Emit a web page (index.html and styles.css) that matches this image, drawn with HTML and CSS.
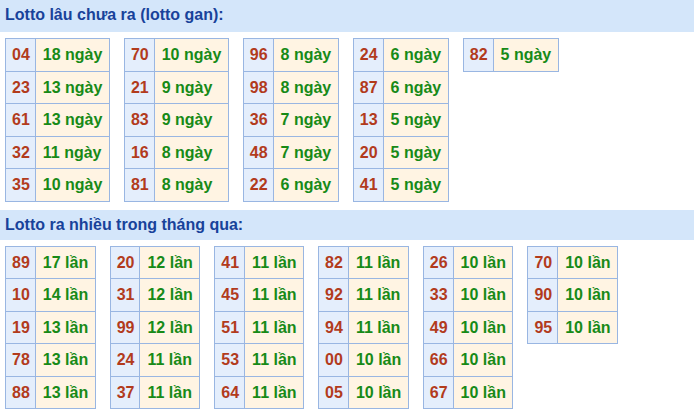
FILE: index.html
```html
<!DOCTYPE html>
<html lang="vi">
<head>
<meta charset="utf-8">
<title>Lotto</title>
<link rel="stylesheet" href="styles.css">
</head>
<body>
<div class="page">
  <h2 class="head head-first">Lotto lâu chưa ra (lotto gan):</h2>
  <div class="group">
    <table class="lt"><tr><td class="n">04</td><td class="v">18 ngày</td></tr><tr><td class="n">23</td><td class="v">13 ngày</td></tr><tr><td class="n">61</td><td class="v">13 ngày</td></tr><tr><td class="n">32</td><td class="v">11 ngày</td></tr><tr><td class="n">35</td><td class="v">10 ngày</td></tr></table>
    <table class="lt"><tr><td class="n">70</td><td class="v">10 ngày</td></tr><tr><td class="n">21</td><td class="v">9 ngày</td></tr><tr><td class="n">83</td><td class="v">9 ngày</td></tr><tr><td class="n">16</td><td class="v">8 ngày</td></tr><tr><td class="n">81</td><td class="v">8 ngày</td></tr></table>
    <table class="lt"><tr><td class="n">96</td><td class="v">8 ngày</td></tr><tr><td class="n">98</td><td class="v">8 ngày</td></tr><tr><td class="n">36</td><td class="v">7 ngày</td></tr><tr><td class="n">48</td><td class="v">7 ngày</td></tr><tr><td class="n">22</td><td class="v">6 ngày</td></tr></table>
    <table class="lt"><tr><td class="n">24</td><td class="v">6 ngày</td></tr><tr><td class="n">87</td><td class="v">6 ngày</td></tr><tr><td class="n">13</td><td class="v">5 ngày</td></tr><tr><td class="n">20</td><td class="v">5 ngày</td></tr><tr><td class="n">41</td><td class="v">5 ngày</td></tr></table>
    <table class="lt"><tr><td class="n">82</td><td class="v">5 ngày</td></tr></table>
  </div>
  <h2 class="head">Lotto ra nhiều trong tháng qua:</h2>
  <div class="group">
    <table class="lt"><tr><td class="n">89</td><td class="v">17 lần</td></tr><tr><td class="n">10</td><td class="v">14 lần</td></tr><tr><td class="n">19</td><td class="v">13 lần</td></tr><tr><td class="n">78</td><td class="v">13 lần</td></tr><tr><td class="n">88</td><td class="v">13 lần</td></tr></table>
    <table class="lt"><tr><td class="n">20</td><td class="v">12 lần</td></tr><tr><td class="n">31</td><td class="v">12 lần</td></tr><tr><td class="n">99</td><td class="v">12 lần</td></tr><tr><td class="n">24</td><td class="v">11 lần</td></tr><tr><td class="n">37</td><td class="v">11 lần</td></tr></table>
    <table class="lt"><tr><td class="n">41</td><td class="v">11 lần</td></tr><tr><td class="n">45</td><td class="v">11 lần</td></tr><tr><td class="n">51</td><td class="v">11 lần</td></tr><tr><td class="n">53</td><td class="v">11 lần</td></tr><tr><td class="n">64</td><td class="v">11 lần</td></tr></table>
    <table class="lt"><tr><td class="n">82</td><td class="v">11 lần</td></tr><tr><td class="n">92</td><td class="v">11 lần</td></tr><tr><td class="n">94</td><td class="v">11 lần</td></tr><tr><td class="n">00</td><td class="v">10 lần</td></tr><tr><td class="n">05</td><td class="v">10 lần</td></tr></table>
    <table class="lt"><tr><td class="n">26</td><td class="v">10 lần</td></tr><tr><td class="n">33</td><td class="v">10 lần</td></tr><tr><td class="n">49</td><td class="v">10 lần</td></tr><tr><td class="n">66</td><td class="v">10 lần</td></tr><tr><td class="n">67</td><td class="v">10 lần</td></tr></table>
    <table class="lt"><tr><td class="n">70</td><td class="v">10 lần</td></tr><tr><td class="n">90</td><td class="v">10 lần</td></tr><tr><td class="n">95</td><td class="v">10 lần</td></tr></table>
  </div>
</div>
</body>
</html>
```

FILE: styles.css
```css
html, body {
  margin: 0;
  padding: 0;
  background: #ffffff;
}
body {
  font-family: "Liberation Sans", Arial, sans-serif;
}
.page {
  width: 694px;
}
.head {
  margin: 0;
  background: #d4e6fa;
  color: #18429a;
  font-size: 16px;
  font-weight: bold;
  height: 30px;
  line-height: 30px;
  padding: 0 5px;
}
.head-first {
  height: 32px;
  line-height: 30px;
}
.group {
  display: flex;
  align-items: flex-start;
  gap: 14px;
  padding: 6px 5px 8px;
}
.lt {
  border-collapse: collapse;
  font-size: 16px;
  font-weight: bold;
}
.lt td {
  border: 1px solid #99b6e2;
  height: 19.5px;
  line-height: 19.5px;
  padding: 6px 5px 6px 6px;
  white-space: nowrap;
}
.lt .n {
  background: #e4eefc;
  color: #b23b1c;
  text-align: center;
}
.lt .v {
  background: #fff4e3;
  color: #178a17;
  padding: 6px 6.5px 6px 7px;
}
```
